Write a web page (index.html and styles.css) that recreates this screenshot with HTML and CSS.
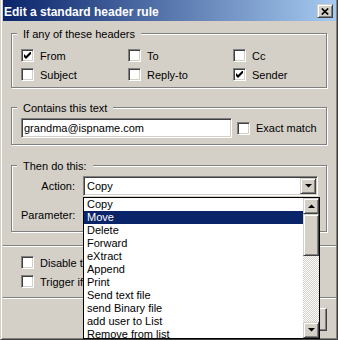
FILE: index.html
```html
<!DOCTYPE html>
<html lang="en">
<head>
  <meta charset="UTF-8" />
  <meta name="viewport" content="width=device-width, initial-scale=1.0"/>
  <title>Edit a standard header rule</title>
  <link rel="stylesheet" href="styles.css">
</head>
<body>

<div class="window">
  <div class="titlebar">
    <span class="title">Edit a standard header rule</span>
    <button class="close raised">
      <svg width="8" height="7" viewBox="0 0 8 7"><path d="M0.8 0.5 L7.2 6.5 M7.2 0.5 L0.8 6.5" stroke="#000" stroke-width="1.7" fill="none"/></svg>
    </button>
  </div>

  <div class="group headers">
    <div class="group-title">If any of these headers</div>
    <div class="checks">
      <label class="check"><span class="box"><svg width="7" height="7" viewBox="0 0 7 7"><polygon points="0,2 2,4 7,-1 7,2 2,7 0,5"/></svg></span>From</label>
      <label class="check"><span class="box"></span>To</label>
      <label class="check"><span class="box"></span>Cc</label>
      <label class="check"><span class="box"></span>Subject</label>
      <label class="check"><span class="box"></span>Reply-to</label>
      <label class="check"><span class="box"><svg width="7" height="7" viewBox="0 0 7 7"><polygon points="0,2 2,4 7,-1 7,2 2,7 0,5"/></svg></span>Sender</label>
    </div>
  </div>

  <div class="group contains">
    <div class="group-title">Contains this text</div>
    <div class="text-row">
      <input class="field" type="text" value="grandma@ispname.com">
      <label class="check"><span class="box"></span>Exact match</label>
    </div>
  </div>

  <div class="group actions">
    <div class="group-title">Then do this:</div>
    <div class="form">
      <span class="form-label">Action:</span>
      <div class="combo">
        <span class="combo-text">Copy</span>
        <span class="combo-btn raised">
          <svg width="7" height="4" viewBox="0 0 7 4"><polygon points="0,0 7,0 3.5,3.6"/></svg>
        </span>
      </div>
      <span class="form-label">Parameter:</span>
      <input class="field wide" type="text" value="">
    </div>
  </div>

  <div class="sep"></div>

  <!-- the open list covers the right part of these -->
  <div class="options">
    <label class="check"><span class="box"></span>Disable this rule</label>
    <label class="check"><span class="box"></span>Trigger if no match</label>
  </div>

  <div class="sep"></div>

  <div class="buttons">
    <button class="btn"></button>
    <button class="btn"></button>
  </div>

  <!-- open dropdown of the Action combo -->
  <div class="list">
    <div class="items">
      <div class="item">Copy</div>
      <div class="item sel">Move</div>
      <div class="item">Delete</div>
      <div class="item">Forward</div>
      <div class="item">eXtract</div>
      <div class="item">Append</div>
      <div class="item">Print</div>
      <div class="item">Send text file</div>
      <div class="item">send Binary file</div>
      <div class="item">add user to List</div>
      <div class="item">Remove from list</div>
    </div>
    <div class="scrollbar">
      <span class="sb-btn raised">
        <svg width="7" height="4" viewBox="0 0 7 4"><polygon points="0,4 7,4 3.5,0.4"/></svg>
      </span>
      <span class="thumb raised"></span>
      <span class="track"></span>
      <span class="sb-btn raised">
        <svg width="7" height="4" viewBox="0 0 7 4"><polygon points="0,0 7,0 3.5,3.6"/></svg>
      </span>
    </div>
  </div>
</div>

</body>
</html>
```

FILE: styles.css
```css
body {
  margin: 0;
  background: #d4d0c8;
  font: 11px "Liberation Sans", Arial, sans-serif;
  color: #000;
  overflow: hidden;
}

.window {
  position: relative;
  width: 338px;
  height: 340px;
  box-sizing: border-box;
  border-left: 1px solid #d4d0c8;
  border-right: 1px solid #404040;
  border-bottom: 1px solid #404040;
  padding: 0 1px 1px 2px;
  box-shadow: inset 1px 0 #fff, inset -1px -1px #808080;
}

/* win classic bevels */
.raised {
  background: #d4d0c8;
  border: 1px solid;
  border-color: #d4d0c8 #404040 #404040 #d4d0c8;
  box-shadow: inset 1px 1px #fff, inset -1px -1px #808080;
  box-sizing: border-box;
}

.titlebar {
  display: flex;
  align-items: flex-start;
  justify-content: space-between;
  height: 21px;
  padding: 0 3px 0 1px;
  box-sizing: border-box;
  background: linear-gradient(to right, #0a246a, #a6caf0);
  color: #fff;
}

.title {
  font-weight: bold;
  font-size: 12px;
  line-height: 14px;
  padding-top: 5px;
}

.close {
  width: 16px;
  height: 14px;
  margin-top: 4px;
  padding: 0;
  display: flex;
  align-items: center;
  justify-content: center;
}

.group {
  margin: 0 9px 0 8px;
  padding: 0 8px 0 9px;
  border: 1px solid #808080;
  box-shadow: inset 1px 1px #fff, 1px 1px #fff;
}

.group-title {
  width: fit-content;
  margin: -6px 0 0 -4px;
  padding: 0 6px;
  line-height: 13px;
  background: #d4d0c8;
}

.headers {
  margin-top: 12px;
}

.checks {
  display: grid;
  grid-template-columns: 107px 105px auto;
  grid-auto-rows: 19px;
  margin: 5px 0 3px;
}

.check {
  display: flex;
  align-items: center;
  gap: 6px;
  white-space: nowrap;
}

.box {
  width: 13px;
  height: 13px;
  box-sizing: border-box;
  flex: none;
  display: flex;
  align-items: center;
  justify-content: center;
  background: #fff;
  border: 1px solid;
  border-color: #808080 #fff #fff #808080;
  box-shadow: inset 1px 1px #404040, inset -1px -1px #d4d0c8;
}

.contains {
  margin-top: 19px;
}

.text-row {
  display: flex;
  align-items: center;
  gap: 5px;
  margin: 3px 0 6px;
}

.field {
  width: 211px;
  height: 20px;
  box-sizing: border-box;
  margin: 0;
  padding: 0 0 0 2px;
  font: inherit;
  color: #000;
  background: #fff;
  border: 1px solid;
  border-color: #808080 #fff #fff #808080;
  box-shadow: inset 1px 1px #404040, inset -1px -1px #d4d0c8;
  outline: none;
}

.field.wide {
  width: 100%;
}

.actions {
  margin-top: 20px;
}

.form {
  display: grid;
  grid-template-columns: 54px 1fr;
  grid-auto-rows: 20px;
  column-gap: 8px;
  row-gap: 9px;
  align-items: center;
  margin: 3px 0 6px;
}

.form-label {
  text-align: right;
  line-height: 13px;
}

.combo {
  height: 20px;
  display: flex;
  align-items: center;
  box-sizing: border-box;
  padding: 1px 1px 1px 3px;
  background: #fff;
  border: 1px solid;
  border-color: #808080 #fff #fff #808080;
  box-shadow: inset 1px 1px #404040, inset -1px -1px #d4d0c8;
}

.combo-text {
  flex: 1;
}

.combo-btn {
  width: 16px;
  height: 16px;
  display: flex;
  align-items: center;
  justify-content: center;
}

.sep {
  margin-top: 13px;
  border-top: 1px solid #808080;
  border-bottom: 1px solid #fff;
}

.options {
  display: grid;
  grid-auto-rows: 19px;
  width: 62px;
  overflow: hidden;
  margin: 6px 0 6px 18px;
}

.options + .sep {
  margin-top: 0;
}

.buttons {
  display: flex;
  justify-content: flex-end;
  gap: 6px;
  margin: 9px 9px 0 0;
}

.btn {
  width: 75px;
  height: 23px;
  padding: 0;
  font: inherit;
  background: #d4d0c8;
  border: 1px solid;
  border-color: #fff #404040 #404040 #fff;
  box-shadow: inset -1px -1px #808080;
}

/* dropdown list overlay */
.list {
  position: absolute;
  left: 82px;
  top: 197px;
  width: 237px;
  height: 142px;
  box-sizing: border-box;
  display: flex;
  border: 1px solid #000;
  background: #fff;
}

.items {
  flex: 1;
  overflow: hidden;
}

.item {
  height: 13px;
  line-height: 13px;
  padding-left: 3px;
  white-space: nowrap;
}

.item.sel {
  background: #0a246a;
  color: #fff;
}

.scrollbar {
  width: 16px;
  display: flex;
  flex-direction: column;
}

.sb-btn {
  height: 16px;
  flex: none;
  display: flex;
  align-items: center;
  justify-content: center;
}

.thumb {
  height: 42px;
  flex: none;
}

.track {
  flex: 1;
  background: repeating-conic-gradient(#fff 0 25%, #d4d0c8 0 50%) 0 0 / 2px 2px;
}
```
